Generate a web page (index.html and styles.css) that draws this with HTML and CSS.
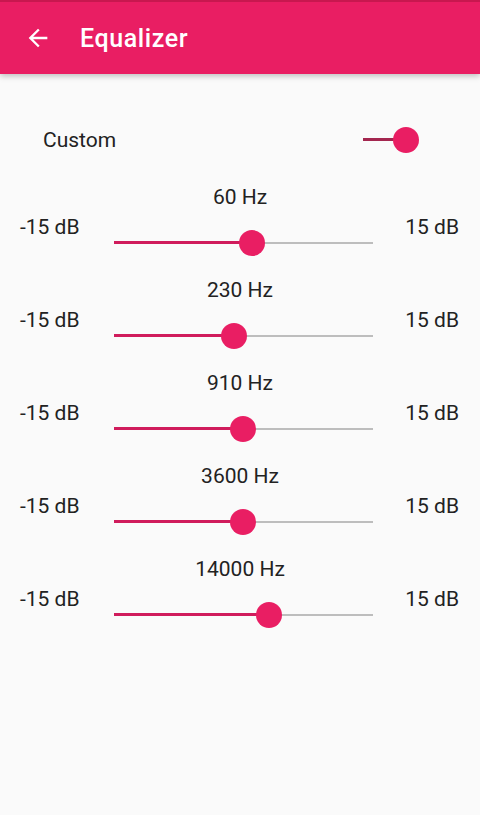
FILE: index.html
```html
<!DOCTYPE html>
<html lang="en">

<head>
    <meta charset="UTF-8">
    <meta name="viewport" content="width=device-width, initial-scale=1.0">
    <title>Equalizer</title>

    <link rel="stylesheet" href="styles.css">
</head>

<body>
    <header class="app-bar">
        <svg class="back-icon" viewBox="0 0 24 24" width="24" height="24">
            <path d="M20 11H7.83l5.59-5.59L12 4l-8 8 8 8 1.41-1.41L7.83 13H20v-2z" fill="#fff" />
        </svg>
        <h1 class="title">Equalizer</h1>
    </header>

    <main class="content">
        <div class="preset-row">
            <span class="preset-name">Custom</span>
            <div class="switch">
                <div class="switch-track"></div>
                <div class="switch-thumb"></div>
            </div>
        </div>

        <div class="band">
            <div class="band-name">60 Hz</div>
            <div class="band-row">
                <span class="db-min">-15 dB</span>
                <div class="slider">
                    <div class="slider-fill" style="width: 53.3%"></div>
                    <div class="slider-thumb" style="left: 53.3%"></div>
                </div>
                <span class="db-max">15 dB</span>
            </div>
        </div>

        <div class="band">
            <div class="band-name">230 Hz</div>
            <div class="band-row">
                <span class="db-min">-15 dB</span>
                <div class="slider">
                    <div class="slider-fill" style="width: 46.3%"></div>
                    <div class="slider-thumb" style="left: 46.3%"></div>
                </div>
                <span class="db-max">15 dB</span>
            </div>
        </div>

        <div class="band">
            <div class="band-name">910 Hz</div>
            <div class="band-row">
                <span class="db-min">-15 dB</span>
                <div class="slider">
                    <div class="slider-fill" style="width: 49.8%"></div>
                    <div class="slider-thumb" style="left: 49.8%"></div>
                </div>
                <span class="db-max">15 dB</span>
            </div>
        </div>

        <div class="band">
            <div class="band-name">3600 Hz</div>
            <div class="band-row">
                <span class="db-min">-15 dB</span>
                <div class="slider">
                    <div class="slider-fill" style="width: 49.8%"></div>
                    <div class="slider-thumb" style="left: 49.8%"></div>
                </div>
                <span class="db-max">15 dB</span>
            </div>
        </div>

        <div class="band">
            <div class="band-name">14000 Hz</div>
            <div class="band-row">
                <span class="db-min">-15 dB</span>
                <div class="slider">
                    <div class="slider-fill" style="width: 59.8%"></div>
                    <div class="slider-thumb" style="left: 59.8%"></div>
                </div>
                <span class="db-max">15 dB</span>
            </div>
        </div>
    </main>
</body>

</html>
```

FILE: styles.css
```css
body {
    margin: 0;
    padding: 0;
    background-color: #fafafa;
    font-family: Roboto, "Noto Sans", sans-serif;
    color: #222;
    height: 815px;
}

/* Top app bar */
.app-bar {
    height: 74px;
    background-color: #e91e63;
    border-top: 2px solid #c8174f;
    box-sizing: border-box;
    display: flex;
    align-items: center;
    padding-left: 24px;
    box-shadow: 0 2px 6px rgba(0, 0, 0, 0.25);
}

.back-icon {
    width: 28px;
    height: 28px;
    margin-top: -1px;
}

.title {
    margin: 0 0 0 28px;
    color: #fff;
    font-size: 25px;
    font-weight: 500;
    letter-spacing: 0.6px;
}

.content {
    padding-top: 46px;
}

/* Preset row with switch */
.preset-row {
    height: 40px;
    display: flex;
    align-items: center;
    justify-content: space-between;
    padding: 0 61px 0 43px;
    margin-bottom: 25px;
}

.preset-name {
    font-size: 21px;
}

.switch {
    position: relative;
    width: 56px;
    height: 26px;
}

.switch-track {
    position: absolute;
    left: 0;
    right: 14px;
    top: 11px;
    height: 3px;
    background-color: #a3264f;
}

.switch-thumb {
    position: absolute;
    right: 0;
    top: 0;
    width: 26px;
    height: 26px;
    border-radius: 50%;
    background-color: #e91e63;
}

/* Band sliders */
.band {
    height: 93px;
}

.band-name {
    text-align: center;
    font-size: 21px;
    line-height: 24px;
}

.band-row {
    display: grid;
    grid-template-columns: 94px 259px 86px;
    padding: 0 21px 0 20px;
    margin-top: 6px;
    align-items: start;
}

.db-min,
.db-max {
    font-size: 21px;
    line-height: 24px;
}

.db-max {
    text-align: right;
}

.slider {
    position: relative;
    height: 30px;
    margin-top: 13px;
}

.slider::before {
    content: "";
    position: absolute;
    left: 0;
    right: 0;
    top: 14px;
    height: 2px;
    background-color: #bdbdbd;
}

.slider-fill {
    position: absolute;
    left: 0;
    top: 13px;
    height: 3px;
    background-color: #d01c5c;
}

.slider-thumb {
    position: absolute;
    top: 2px;
    width: 26px;
    height: 26px;
    margin-left: -13px;
    border-radius: 50%;
    background-color: #e91e63;
}
```
